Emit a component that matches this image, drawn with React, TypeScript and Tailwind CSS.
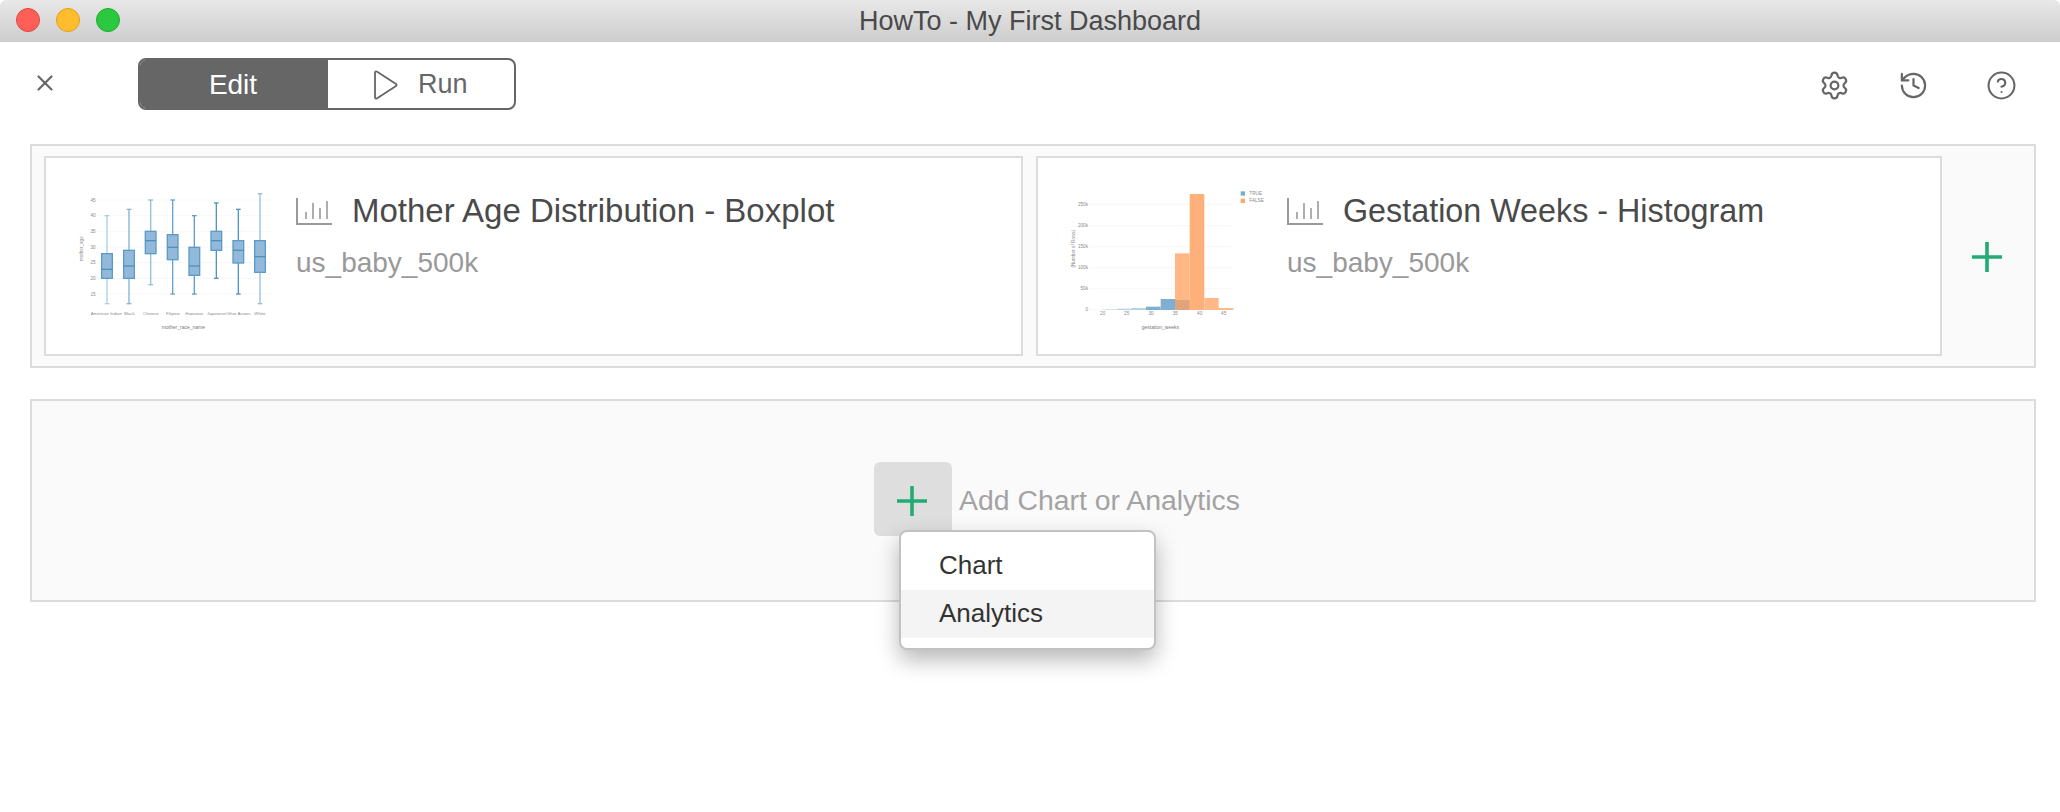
import { Settings, History, CircleHelp, X } from "lucide-react";

const F = { fontFamily: '"Liberation Sans", Arial, sans-serif' };

function Plus() {
  return (
    <svg width="30" height="30" viewBox="0 0 30 30" className="block">
      <path d="M0 15H30M15 0V30" stroke="#22ac74" strokeWidth="3.6" fill="none" />
    </svg>
  );
}

function BarIcon() {
  return (
    <svg width="36" height="27" viewBox="0 0 36 27" className="block shrink-0">
      <path d="M1 0V26H36" stroke="#9a9a9a" strokeWidth="2" fill="none" />
      <path d="M10 14V21M17 5V21M24 10V21M31 3V21" stroke="#9a9a9a" strokeWidth="1.6" fill="none" />
    </svg>
  );
}

const grid = [150, 197, 245, 291, 338, 385, 432];
const gridLabels = ["45", "40", "35", "30", "25", "20", "15"];
const boxes = [
  { x: 231, top: 197, q3: 311, med: 358, q1: 385, bot: 461, o: 0.45 },
  { x: 297, top: 178, q3: 301, med: 348, q1: 385, bot: 461, o: 0.7 },
  { x: 362, top: 150, q3: 244, med: 272, q1: 311, bot: 404, o: 0.6 },
  { x: 428, top: 150, q3: 254, med: 292, q1: 329, bot: 432, o: 0.85 },
  { x: 493, top: 197, q3: 292, med: 348, q1: 376, bot: 432, o: 0.9 },
  { x: 559, top: 159, q3: 244, med: 272, q1: 301, bot: 385, o: 1 },
  { x: 625, top: 178, q3: 272, med: 301, q1: 339, bot: 432, o: 1 },
  { x: 690, top: 131, q3: 272, med: 320, q1: 367, bot: 461, o: 0.6 },
];

function Boxplot() {
  const t = { fontSize: 14, fill: "#8a8a8a" };
  return (
    <svg width="250" height="196" viewBox="48 24 750 588" className="block shrink-0" style={F}>
      {grid.map((y, i) => (
        <g key={y}>
          <line x1="200" x2="722" y1={y} y2={y} stroke="#f3f3f3" strokeWidth="2" />
          <text x="197" y={y + 5} textAnchor="end" {...t}>{gridLabels[i]}</text>
        </g>
      ))}
      <text transform="translate(160 296) rotate(-90)" textAnchor="middle" {...t}>mother_age</text>
      {boxes.map((b) => (
        <g key={b.x}>
          <g opacity={b.o} stroke="#4f94c4">
            <line x1={b.x} x2={b.x} y1={b.top} y2={b.bot} strokeWidth="4" />
            <line x1={b.x - 7} x2={b.x + 7} y1={b.top} y2={b.top} strokeWidth="4" />
            <line x1={b.x - 7} x2={b.x + 7} y1={b.bot} y2={b.bot} strokeWidth="4" />
          </g>
          <rect x={b.x - 16} y={b.q3} width="32" height={b.q1 - b.q3} fill="#92b9da" stroke="#5c9bc8" strokeWidth="4" />
          <line x1={b.x - 16} x2={b.x + 16} y1={b.med} y2={b.med} stroke="#4f8fbe" strokeWidth="4" />
        </g>
      ))}
      <text x="182" y="494" {...t} fontSize="13">American Indian</text>
      <text x="282" y="494" {...t} fontSize="13">Black</text>
      <text x="339" y="494" {...t} fontSize="13">Chinese</text>
      <text x="408" y="494" {...t} fontSize="13">Filipino</text>
      <text x="466" y="494" {...t} fontSize="13">Hawaiian</text>
      <text x="531" y="494" {...t} fontSize="13">Japanese</text>
      <text x="587" y="494" {...t} fontSize="13">Other Asians</text>
      <text x="673" y="494" {...t} fontSize="13">White</text>
      <text x="460" y="536" textAnchor="middle" fontSize="15" fill="#777">mother_race_name</text>
    </svg>
  );
}

function Histogram() {
  const t = { fontSize: 14, fill: "#8a8a8a" };
  const ys: [number, string][] = [[163, "250k"], [227, "200k"], [290, "150k"], [353, "100k"], [416, "50k"], [479, "0"]];
  const xs: [number, string][] = [[218, "20"], [290, "25"], [363, "30"], [436, "35"], [509, "40"], [581, "45"]];
  return (
    <svg width="249" height="196" viewBox="24 24 747 588" className="block shrink-0" style={F}>
      {ys.map(([y, l]) => (
        <g key={l}>
          <line x1="178" x2="610" y1={y} y2={y} stroke="#f3f3f3" strokeWidth="2" />
          <text x="174" y={y + 5} textAnchor="end" {...t}>{l}</text>
        </g>
      ))}
      {xs.map(([x, l]) => (
        <text key={l} x={x} y="495" textAnchor="middle" {...t}>{l}</text>
      ))}
      <text transform="translate(136 296) rotate(-90)" textAnchor="middle" {...t}>(Number of Rows)</text>
      <rect x="218" y="477" width="44" height="3" fill="#d6e5f0" />
      <rect x="262" y="476" width="44" height="4" fill="#b6d2e6" />
      <rect x="306" y="474" width="42" height="6" fill="#b6d2e6" />
      <rect x="348" y="470" width="44" height="10" fill="#7fb0d3" />
      <rect x="392" y="447" width="43" height="33" fill="#7fb0d3" />
      <rect x="435" y="450" width="44" height="30" fill="#7fb0d3" />
      <rect x="435" y="310" width="44" height="170" fill="#ffa05c" fillOpacity="0.75" />
      <rect x="479" y="132" width="44" height="348" fill="#ffb07a" />
      <rect x="523" y="444" width="43" height="36" fill="#ffb886" />
      <rect x="566" y="474" width="44" height="6" fill="#ffb886" />
      <rect x="632" y="124" width="13" height="13" fill="#79add2" />
      <rect x="632" y="146" width="13" height="13" fill="#ffa86b" />
      <text x="658" y="135" {...t}>TRUE</text>
      <text x="658" y="157" {...t}>FALSE</text>
      <text x="391" y="536" textAnchor="middle" fontSize="15" fill="#777">gestation_weeks</text>
    </svg>
  );
}

function CardText({ title, titleClass }: { title: string; titleClass: string }) {
  return (
    <div className="flex flex-col pt-[32px]">
      <div className="flex items-center h-[42px] gap-[20px]">
        <BarIcon />
        <span className={`${titleClass} leading-[42px] text-[#4a4a4a] whitespace-nowrap`}>{title}</span>
      </div>
      <div className="text-[28px] leading-[36px] text-[#999] mt-[13px]">us_baby_500k</div>
    </div>
  );
}

export default function App() {
  return (
    <div className="relative w-[2060px] h-[812px] bg-white overflow-hidden" style={F}>
      <div className="h-[42px] relative flex items-center justify-center rounded-t-[6px] bg-gradient-to-b from-[#e8e8e8] to-[#cdcdcd]">
        <div className="absolute left-[16px] top-[8px] flex gap-[16px]">
          <span className="w-[24px] h-[24px] rounded-full bg-[#ff5f57] border border-[#e2463f]" />
          <span className="w-[24px] h-[24px] rounded-full bg-[#ffbd2e] border border-[#e1a116]" />
          <span className="w-[24px] h-[24px] rounded-full bg-[#2ac940] border border-[#1dad2b]" />
        </div>
        <span className="text-[27px] text-[#4a4a4a]">HowTo - My First Dashboard</span>
      </div>

      <div className="h-[102px] flex items-start">
        <X className="ml-[32px] mt-[28px] text-[#666] shrink-0" size={26} strokeWidth={2} />
        <div className="ml-[80px] mt-[16px] w-[378px] h-[52px] flex rounded-[8px] border-2 border-[#666] overflow-hidden">
          <div className="w-[188px] bg-[#666] flex items-center justify-center pt-[1px] pr-[2px] text-white text-[28px]">Edit</div>
          <div className="flex-1 flex items-center pl-[45px] gap-[20px] pt-[1px] text-[#666] text-[27px]">
            <svg width="25" height="30" viewBox="0 0 25 30" className="block shrink-0">
              <path d="M2 2.5C2 1.5 3 1 3.8 1.6L23 14c.8.5.8 1.5 0 2L3.8 28.4C3 29 2 28.5 2 27.5Z" fill="none" stroke="#666" strokeWidth="1.8" strokeLinejoin="round" />
            </svg>
            <span>Run</span>
          </div>
        </div>
        <div className="ml-auto mt-[28px] flex text-[#666]">
          <Settings size={31} strokeWidth={1.7} className="mr-[48px]" />
          <History size={31} strokeWidth={1.7} className="mr-[57px]" />
          <CircleHelp size={31} strokeWidth={1.6} className="mr-[43px]" />
        </div>
      </div>

      <div className="mx-[30px] w-[2006px] h-[224px] bg-[#fafafa] border-2 border-[#dcdcdc] flex items-start pt-[10px] pl-[12px]">
        <div className="w-[979px] h-[200px] bg-white border-2 border-[#dcdcdc] flex">
          <Boxplot />
          <CardText title="Mother Age Distribution - Boxplot" titleClass="text-[33px]" />
        </div>
        <div className="ml-[13px] w-[906px] h-[200px] bg-white border-2 border-[#dcdcdc] flex">
          <Histogram />
          <CardText title="Gestation Weeks - Histogram" titleClass="text-[32.3px]" />
        </div>
        <div className="ml-[30px] mt-[86px]"><Plus /></div>
      </div>

      <div className="mt-[31px] mx-[30px] w-[2006px] h-[203px] bg-[#fafafa] border-2 border-[#dcdcdc] flex items-center pl-[842px] pb-[3px]">
        <div className="w-[78px] h-[74px] bg-[#dedede] rounded-[6px] flex items-center justify-center pt-[3px] pr-[2px]"><Plus /></div>
        <span className="ml-[7px] mt-[3px] text-[28.4px] text-[#a3a3a3]">Add Chart or Analytics</span>
      </div>

      <div className="absolute left-[899px] top-[530px] w-[257px] h-[120px] bg-white border-2 border-[#c2c2c2] rounded-[8px] shadow-[0_10px_22px_rgba(0,0,0,0.28)] pt-[10px] text-[26px] text-[#333]">
        <div className="h-[48px] leading-[46px] pl-[38px]">Chart</div>
        <div className="h-[48px] leading-[46px] pl-[38px] bg-[#f4f4f4]">Analytics</div>
      </div>
    </div>
  );
}
